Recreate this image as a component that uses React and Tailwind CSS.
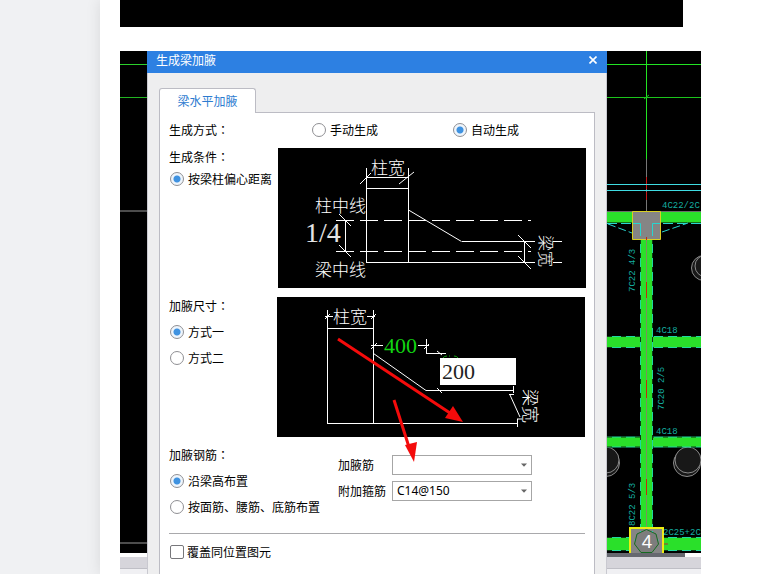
import React, { useState } from 'react';

const CAD_FONT = "'Liberation Mono', monospace";
const CJK_FONT = "'Noto Sans CJK SC', sans-serif";
const SERIF_FONT = "'Liberation Serif', serif";

function Radio({ name, value, current, onChange, children }) {
  return (
    <label className="flex h-[18px] items-center gap-1 pl-px whitespace-nowrap">
      <input
        type="radio"
        name={name}
        checked={current === value}
        onChange={() => onChange(value)}
        className="size-[14px] shrink-0 appearance-none rounded-full border border-[#8f8f93] bg-white checked:bg-[radial-gradient(circle,#3f92e0_3px,#eef5fc_4px)]"
      />
      {children}
    </label>
  );
}

// the TC face centres the full-width colon in its box
function Caption({ children }) {
  return (
    <span className="h-[18px] leading-[18px] whitespace-nowrap">
      {children}
      <span className="font-['Noto_Sans_CJK_TC',sans-serif]">：</span>
    </span>
  );
}

function Combo({ id, label, options }) {
  return (
    <div className="flex h-5 items-center">
      <label htmlFor={id} className="w-[54px] shrink-0 whitespace-nowrap">{label}</label>
      <div className="relative w-[140px]">
        <select
          id={id}
          className="block h-5 w-full appearance-none border border-[#a6a6a6] bg-white pl-1 font-['Noto_Sans'] text-[12px] leading-[18px] text-black"
        >
          {options.map(o => (
            <option key={o}>{o}</option>
          ))}
        </select>
        <svg className="pointer-events-none absolute top-2 right-[5px] h-1 w-[6px]" viewBox="0 0 6 4">
          <path d="M0 0.5h6L3 3.8z" fill="#666" />
        </svg>
      </div>
    </div>
  );
}

function EccentricDiagram() {
  return (
    <svg className="block h-[140px] w-full bg-black" viewBox="0 0 308 140" preserveAspectRatio="xMinYMin meet">
      <g stroke="#fff" fill="none" shapeRendering="crispEdges">
        <path d="M88.5 20v94.5M130.5 20v94.5M88.5 29.5h42M88.5 40.5h42M88.5 114.5h168" />
        <path d="M183.5 93.5h73M67.5 72v32M246.5 93v22M275 93.5h9M275 114.5h9" />
        <path d="M58 72.5h195M58 103.5h195" strokeDasharray="18 6" />
      </g>
      <g stroke="#fff" fill="none">
        <path d="M82 36l11-11M121 36l15-12M130.5 62l53 31.5" />
        <path d="M61 66l12 12M61 97l12 12M240 87l13 13M240 108l13 13" />
      </g>
      <g fill="#fff" fontFamily={CJK_FONT} fontWeight="300">
        <text x="93" y="26" fontSize="17">柱宽</text>
        <text x="37" y="64" fontSize="17">柱中线</text>
        <text x="37" y="128" fontSize="17">梁中线</text>
        <text transform="translate(262 87) rotate(90)" fontSize="16">梁宽</text>
      </g>
      <text x="27" y="94" fill="#e4e4e4" fontFamily={SERIF_FONT} fontSize="28">1/4</text>
    </svg>
  );
}

function SizeDiagram() {
  return (
    <svg className="block h-[140px] w-full bg-black" viewBox="0 0 308 140" preserveAspectRatio="xMinYMin meet">
      <g stroke="#fff" fill="none" shapeRendering="crispEdges">
        <path d="M50.5 13v113.5M96.5 13v113.5M50.5 31.5h46M50.5 126.5h190M240.5 122v8" />
        <path d="M48 19.5h8M90 19.5h8M94 48.5h12M141 48.5h11M149.5 42v14.5h19" />
        <path d="M149 93.5h87.5M236.5 89v7M232 97.5h5" />
      </g>
      <g stroke="#fff" fill="none">
        <path d="M96.5 56.5l52.5 37M233 98l10 22M240 122h5M48 22l5-5M94 22l5-5M94 52l6-6M147 52l5-5M160 54l5 4M160 91l5 5" />
      </g>
      <g fill="#fff" fontFamily={CJK_FONT} fontWeight="300">
        <text x="56" y="26" fontSize="17">柱宽</text>
        <text transform="translate(247 92) rotate(90)" fontSize="17">梁宽</text>
      </g>
      <text x="107" y="56" fill="#12d412" fontFamily={SERIF_FONT} fontSize="22">400</text>
      <path d="M166 61q1-2 4-2M172 59h1M177 59q3 0 4 2" stroke="#12a412" fill="none" />
    </svg>
  );
}

function Arrows() {
  return (
    <svg className="pointer-events-none absolute top-0 left-0 h-[170px] w-[200px]" viewBox="0 0 200 170">
      <g stroke="#f40b0b" strokeWidth="3" fill="none">
        <path d="M61 42l112 74M117 103l15 47" />
      </g>
      <g fill="#f40b0b">
        <path d="M186 125l-18-4l8-12z" />
        <path d="M137 165l-9-17l12-3z" />
      </g>
    </svg>
  );
}

function Band({ d, width }) {
  return (
    <g fill="none">
      <path d={d} stroke="#20d8a0" strokeWidth={width} />
      <path d={d} stroke="#0b3a12" strokeWidth={width} strokeDasharray="5 9" />
      <path d={d} stroke="#2ae02a" strokeWidth={width - 2} />
    </g>
  );
}

function LeftPlan() {
  return (
    <svg className="block h-[502px] w-full bg-black" viewBox="0 0 27 502" preserveAspectRatio="none">
      <path d="M0 13.5h27" stroke="#2bd02b" />
      <path d="M0 46.5h27" stroke="#22b422" />
      <path d="M0 160h27M0 492h27" stroke="#4c4c4c" strokeWidth="2" />
    </svg>
  );
}

function RightPlan() {
  return (
    <svg className="block h-[502px] w-full bg-black" viewBox="0 0 94 502" preserveAspectRatio="xMinYMin slice">
      <path d="M0 13.5h94M39.5 0v108" stroke="#22e322" />
      <path d="M0 46.5h94" stroke="#1cc41c" />
      <path d="M37 48l5-4" stroke="#1cc41c" />
      <path d="M39.5 108v52" stroke="#777" />
      <path d="M39.5 126v12M39.5 141v8" stroke="#c81818" />
      <path d="M0 133.5h94M0 139.5h94" stroke="#3fdce2" />

      <g stroke="#8b8b8b" fill="#181818">
        <circle cx="97" cy="217" r="12.5" />
        <circle cx="99" cy="215" r="11" />
        <circle cx="80" cy="412" r="13.5" />
        <circle cx="81" cy="409" r="13" />
        <circle cx="-1" cy="412" r="13.5" />
        <circle cx="-1" cy="409" r="13" />
      </g>

      <path d="M0 166h94" stroke="#2ae02a" strokeWidth="11" />
      <path d="M0 160.5h94" stroke="#6b6b6b" />
      <path d="M0 172.5h94" stroke="#27d5d0" strokeDasharray="10 4" />
      <path d="M1 173l24 9M55 181l26-9" stroke="#27d5d0" strokeDasharray="8 3" />

      <Band d="M0 291h94" width={12} />
      <Band d="M0 391h94" width={11} />
      <Band d="M0 493h94" width={14} />
      <Band d="M39.5 188v314" width={13} />
      <path d="M34 291h11M34 391h11" stroke="#2ae02a" strokeWidth="13" />
      <path d="M39.5 188v292" stroke="#7d8f5c" />
      <path d="M39.5 231v16M39.5 329v18M39.5 428v16" stroke="#c42a10" />

      <path d="M25.5 160.5h28v28h-28z" fill="#858585" stroke="#d9cf22" />
      <path d="M26 172.5h7.5V185M53 172.5h-7.5V185" stroke="#27d5d0" fill="none" />
      <path d="M39.5 186v3" stroke="#c42a10" />

      <path d="M23 503v-26h33v26z" fill="#858585" stroke="#eded12" strokeWidth="2" />
      <path d="M33.5 480v9h-6M45.5 480v9h6" stroke="#27d5d0" fill="none" />
      <path d="M39.5 478.5l9.5 4.5l2.5 10l-6.5 8.500h-11l-6.500-8.500l2.500-10z" fill="#7d7d7d" stroke="#156b20" />
      <path d="M57 493h4" stroke="#a33" />
      <text x="40" y="497" textAnchor="middle" fill="#fff" fontFamily="'Noto Sans', sans-serif" fontSize="18">4</text>

      <g fill="#14aea0" fontFamily={CAD_FONT} fontSize="9">
        <text x="55" y="157">4C22/2C</text>
        <text x="49" y="282">4C18</text>
        <text x="49" y="383">4C18</text>
        <text x="56" y="484">2C25+2C</text>
        <text transform="translate(28 241) rotate(-90)">7C22 4/3</text>
        <text transform="translate(57 359) rotate(-90)">7C20 2/5</text>
        <text transform="translate(28 475) rotate(-90)">8C22 5/3</text>
      </g>
    </svg>
  );
}

function HaunchDialog() {
  const [method, setMethod] = useState('auto');
  const [condition, setCondition] = useState('offset');
  const [size, setSize] = useState('one');
  const [rebar, setRebar] = useState('height');

  return (
    <section className="flex min-w-0 flex-1 flex-col border-x border-[#c9c9d0] bg-[#eeeeef]">
      <header className="-mx-px flex h-[22px] items-start justify-between bg-[#2d80e2] pr-2 pl-[9px] text-white">
        <h2 className="leading-[18px]">生成梁加腋</h2>
        <button type="button" aria-label="关闭" className="flex h-[18px] w-3 items-center justify-center">
          <svg className="size-2" viewBox="0 0 8 8">
            <path d="M0.5 0.5l7 7M7.5 0.5l-7 7" stroke="#fff" strokeWidth="1.6" />
          </svg>
        </button>
      </header>

      <div className="flex flex-1 flex-col px-[11px] pt-[15px]">
        <div role="tablist" className="flex">
          <button
            type="button"
            role="tab"
            aria-selected="true"
            className="z-10 -mb-px h-[25px] w-[97px] rounded-t-[3px] border border-b-0 border-[#bcbcc4] bg-white text-[#2d7bd0]"
          >
            梁水平加腋
          </button>
        </div>

        <div className="flex flex-1 flex-col gap-[9px] border border-b-0 border-[#bcbcc4] bg-white pt-2 pr-2 pl-[9px]">
          <div className="flex h-[18px] items-center">
            <div className="flex w-[142px]">
              <Caption>生成方式</Caption>
            </div>
            <div className="w-[141px]">
              <Radio name="method" value="manual" current={method} onChange={setMethod}>手动生成</Radio>
            </div>
            <Radio name="method" value="auto" current={method} onChange={setMethod}>自动生成</Radio>
          </div>

          <div className="flex">
            <div className="flex w-[109px] shrink-0 flex-col gap-1">
              <Caption>生成条件</Caption>
              <Radio name="condition" value="offset" current={condition} onChange={setCondition}>按梁柱偏心距离</Radio>
            </div>
            <div className="min-w-0 flex-1">
              <EccentricDiagram />
            </div>
          </div>

          <div className="flex">
            <div className="flex w-[108px] shrink-0 flex-col gap-2">
              <Caption>加腋尺寸</Caption>
              <Radio name="size" value="one" current={size} onChange={setSize}>方式一</Radio>
              <Radio name="size" value="two" current={size} onChange={setSize}>方式二</Radio>
            </div>
            <div className="relative z-10 mr-px min-w-0 flex-1">
              <SizeDiagram />
              <input
                type="text"
                aria-label="加腋宽度"
                defaultValue="200"
                className="absolute top-[61px] left-[163px] h-[27px] w-[76px] bg-white pl-0.5 font-['Liberation_Serif'] text-[22px] leading-[27px] text-[#222]"
              />
              <Arrows />
            </div>
          </div>

          <div className="flex">
            <div className="flex w-[169px] shrink-0 flex-col gap-2">
              <Caption>加腋钢筋</Caption>
              <Radio name="rebar" value="height" current={rebar} onChange={setRebar}>沿梁高布置</Radio>
              <Radio name="rebar" value="face" current={rebar} onChange={setRebar}>按面筋、腰筋、底筋布置</Radio>
            </div>
            <div className="flex flex-col gap-1.5 pt-[9px]">
              <Combo id="haunch-bar" label="加腋筋" options={['', 'C14', 'C16']} />
              <Combo id="stirrup" label="附加箍筋" options={['C14@150', 'C14@200']} />
            </div>
          </div>

          <hr className="mt-2 mr-px border-t border-[#a9a9ac]" />

          <label className="flex h-[18px] items-center gap-[3px] pl-px">
            <input type="checkbox" className="size-[14px] appearance-none rounded-xs border border-[#77777b] bg-white checked:bg-[#3f92e0]" />
            覆盖同位置图元
          </label>
        </div>
      </div>
    </section>
  );
}

export default function App() {
  return (
    <div className="flex min-h-screen bg-[#f0f1f3] font-['Noto_Sans_CJK_SC',sans-serif] text-[12px] text-black">
      <aside className="w-[100px] shrink-0" />
      <main className="flex min-w-0 flex-1 flex-col gap-6 bg-white pr-[81px] pl-5 shadow-[0_0_14px_rgba(0,0,0,0.1)]">
        <div className="mr-[18px] h-[27px] bg-black" />

        <div className="flex flex-1">
          <div className="flex w-[27px] shrink-0 flex-col">
            <LeftPlan />
            <div className="mt-1 h-3 border-b border-[#bfbfc6] bg-[#d6d5db]" />
            <div className="flex-1 bg-[#f0f0f3]" />
          </div>

          <HaunchDialog />

          <div className="flex w-[94px] shrink-0 flex-col">
            <RightPlan />
            <div className="h-1">
              <div className="h-1 w-[78px] bg-[#66686f]" />
            </div>
            <div className="h-3 border-b border-[#bfbfc6] bg-[#d6d5db]" />
            <div className="flex-1 bg-[#f0f0f3]" />
          </div>
        </div>
      </main>
    </div>
  );
}
